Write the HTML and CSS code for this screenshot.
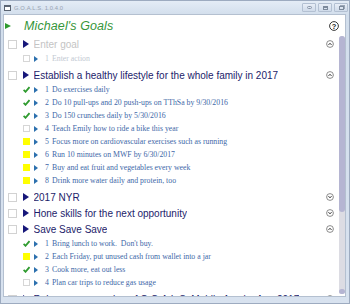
FILE: index.html
```html
<!DOCTYPE html>
<html lang="en">
<head>
  <meta charset="UTF-8">
  <meta name="viewport" content="width=device-width, initial-scale=1.0">
  <title>G.O.A.L.S. 1.0.4.0</title>
  <link rel="stylesheet" href="styles.css">
</head>
<body>
  <svg class="defs" width="0" height="0">
    <defs>
      <symbol id="chev-up" viewBox="0 0 8 8">
        <circle cx="4" cy="4" r="3.4" fill="#fff" stroke="#6e6e6e" stroke-width="0.8"/>
        <path d="M2.5 4.9 L4 3.3 L5.5 4.9" fill="none" stroke="#2a2a2a" stroke-width="1"/>
      </symbol>
      <symbol id="chev-down" viewBox="0 0 8 8">
        <circle cx="4" cy="4" r="3.4" fill="#fff" stroke="#6e6e6e" stroke-width="0.8"/>
        <path d="M2.5 3.2 L4 4.8 L5.5 3.2" fill="none" stroke="#2a2a2a" stroke-width="1"/>
      </symbol>
      <symbol id="check" viewBox="0 0 7 7">
        <path d="M0.6 3.9 L2.5 5.8 L6.5 1.1" fill="none" stroke="#2f9b2f" stroke-width="1.8"/>
      </symbol>
    </defs>
  </svg>

  <div class="window">
    <div class="titlebar">
      <span class="app-icon"></span>
      <span class="title">G.O.A.L.S. 1.0.4.0</span>
      <div class="caption">
        <span class="cap-btn"><i class="glyph-min"></i></span>
        <span class="cap-btn"><i class="glyph-max"></i></span>
        <span class="cap-btn"><i class="glyph-restore"></i></span>
      </div>
    </div>

    <div class="client">
      <div class="header">
        <span class="tri tri-green"></span>
        <h1>Michael's Goals</h1>
        <svg class="help" viewBox="0 0 10 10">
          <circle cx="5" cy="5" r="4.4" fill="#fff" stroke="#222" stroke-width="0.9"/>
          <text x="5" y="7.6" text-anchor="middle" font-size="7.5" font-weight="bold" font-family="Liberation Sans, sans-serif" fill="#222">?</text>
        </svg>
      </div>

      <div class="body">
        <div class="list">
          <div class="goal placeholder">
            <span class="box"></span><span class="tri tri-goal"></span>
            <span class="goal-text">Enter goal</span>
            <svg class="chev"><use href="#chev-up"/></svg>
          </div>
          <div class="actions">
            <div class="action placeholder">
              <span class="abox empty"></span><span class="tri tri-action"></span>
              <span class="num">1</span><span class="action-text">Enter action</span>
            </div>
          </div>

          <div class="goal">
            <span class="box"></span><span class="tri tri-goal"></span>
            <span class="goal-text">Establish a healthy lifestyle for the whole family in 2017</span>
            <svg class="chev"><use href="#chev-up"/></svg>
          </div>
          <div class="actions">
            <div class="action">
              <svg class="abox"><use href="#check"/></svg><span class="tri tri-action"></span>
              <span class="num">1</span><span class="action-text">Do exercises daily</span>
            </div>
            <div class="action">
              <svg class="abox"><use href="#check"/></svg><span class="tri tri-action"></span>
              <span class="num">2</span><span class="action-text">Do 10 pull-ups and 20 push-ups on TThSa by 9/30/2016</span>
            </div>
            <div class="action">
              <svg class="abox"><use href="#check"/></svg><span class="tri tri-action"></span>
              <span class="num">3</span><span class="action-text">Do 150 crunches daily by 5/30/2016</span>
            </div>
            <div class="action">
              <span class="abox empty"></span><span class="tri tri-action"></span>
              <span class="num">4</span><span class="action-text">Teach Emily how to ride a bike this year</span>
            </div>
            <div class="action">
              <span class="abox partial"></span><span class="tri tri-action"></span>
              <span class="num">5</span><span class="action-text">Focus more on cardiovascular exercises such as running</span>
            </div>
            <div class="action">
              <span class="abox partial"></span><span class="tri tri-action"></span>
              <span class="num">6</span><span class="action-text">Run 10 minutes on MWF by 6/30/2017</span>
            </div>
            <div class="action">
              <span class="abox partial"></span><span class="tri tri-action"></span>
              <span class="num">7</span><span class="action-text">Buy and eat fruit and vegetables every week</span>
            </div>
            <div class="action">
              <span class="abox partial"></span><span class="tri tri-action"></span>
              <span class="num">8</span><span class="action-text">Drink more water daily and protein, too</span>
            </div>
          </div>

          <div class="goal">
            <span class="box"></span><span class="tri tri-goal"></span>
            <span class="goal-text">2017 NYR</span>
            <svg class="chev"><use href="#chev-down"/></svg>
          </div>
          <div class="goal">
            <span class="box"></span><span class="tri tri-goal"></span>
            <span class="goal-text">Hone skills for the next opportunity</span>
            <svg class="chev"><use href="#chev-down"/></svg>
          </div>
          <div class="goal">
            <span class="box"></span><span class="tri tri-goal"></span>
            <span class="goal-text">Save Save Save</span>
            <svg class="chev"><use href="#chev-up"/></svg>
          </div>
          <div class="actions">
            <div class="action">
              <svg class="abox"><use href="#check"/></svg><span class="tri tri-action"></span>
              <span class="num">1</span><span class="action-text">Bring lunch to work.&nbsp; Don't buy.</span>
            </div>
            <div class="action">
              <span class="abox partial"></span><span class="tri tri-action"></span>
              <span class="num">2</span><span class="action-text">Each Friday, put unused cash from wallet into a jar</span>
            </div>
            <div class="action">
              <svg class="abox"><use href="#check"/></svg><span class="tri tri-action"></span>
              <span class="num">3</span><span class="action-text">Cook more, eat out less</span>
            </div>
            <div class="action">
              <span class="abox empty"></span><span class="tri tri-action"></span>
              <span class="num">4</span><span class="action-text">Plan car trips to reduce gas usage</span>
            </div>
          </div>

          <div class="goal">
            <span class="box"></span><span class="tri tri-goal"></span>
            <span class="goal-text">Release new version of G.O.A.L.S. Mobile App by Aug 2017</span>
            <svg class="chev"><use href="#chev-up"/></svg>
          </div>
        </div>

        <div class="scrollbar">
          <span class="thumb"></span>
          <span class="knob"></span>
        </div>
      </div>
    </div>
  </div>
</body>
</html>
```

FILE: styles.css
```css
* { box-sizing: border-box; }
body { margin: 0; width: 350px; height: 304px; overflow: hidden; font-family: "Liberation Sans", Arial, sans-serif; }
.defs { display: none; }

/* window frame */
.window { width: 350px; height: 304px; display: flex; flex-direction: column; border: 1px solid #9dabc0; background: linear-gradient(#e4ecf6, #d2deec 14px, #d8e2ef); padding: 0 3px 6px 2px; }
.titlebar { height: 13px; flex: none; display: flex; align-items: center; }
.app-icon { width: 7px; height: 6px; border: 1px solid #5a6472; border-top-width: 2px; background: #fff; margin: 0 3px 0 1px; }
.title { font-size: 5.8px; color: #98a3b2; letter-spacing: 0.1px; }
.caption { margin-left: auto; margin-right: -2px; display: flex; gap: 2px; }
.cap-btn { width: 14px; height: 9px; border: 1px solid #b3c0d2; border-radius: 1px; background: linear-gradient(#e8eef7, #d0dbea); display: flex; align-items: center; justify-content: center; }
.glyph-min { width: 5px; height: 3px; border: 1px solid #8a96a8; border-radius: 2px; }
.glyph-max { width: 5px; height: 4px; border: 1px solid #7d8a9c; border-top-width: 2px; }
.glyph-restore { width: 5px; height: 4px; border: 1px solid #7d8a9c; box-shadow: 1px -1px 0 #9aa6b6; }

/* client area */
.client { flex: 1; min-height: 0; display: flex; flex-direction: column; background: #fff; border: 1px solid #b4c0d0; }
.header { height: 21px; flex: none; display: flex; align-items: center; padding-left: 1px; }
.header h1 { margin: 1px 0 0 13px; font-size: 12.5px; font-style: italic; font-weight: normal; color: #36963a; letter-spacing: 0.1px; }
.help { width: 10px; height: 10px; margin-left: auto; margin-right: 6px; margin-top: 1px; }

.tri { width: 0; height: 0; flex: none; border-style: solid; border-color: transparent; }
.tri-green { border-width: 3.5px 0 3.5px 6px; border-left-color: #2f9a2f; }
.tri-goal { margin-left: 6px; border-width: 4px 0 4px 6px; border-left-color: #17177a; }
.tri-action { margin-left: 4px; border-width: 3.5px 0 3.5px 4px; border-left-color: #2c70ae; }

.body { flex: 1; min-height: 0; display: flex; }
.list { flex: 1; min-width: 0; overflow: hidden; padding-left: 4px; }

.goal { height: 16px; display: flex; align-items: center; }
.box { width: 9px; height: 9px; flex: none; border: 1px solid #d2d2d2; }
.goal-text { margin-left: 4.5px; font-size: 10px; color: #1c1c6a; white-space: nowrap; overflow: hidden; }
.goal.placeholder .goal-text { color: #c4c4c4; }
.chev { width: 8px; height: 8px; flex: none; margin-left: auto; margin-right: 5px; }

.actions { margin-bottom: 2px; }
.action { height: 13px; display: flex; align-items: center; padding-left: 15px; font-family: "Liberation Serif", "Times New Roman", serif; font-size: 7.8px; color: #4068a8; }
.abox { width: 7px; height: 7px; flex: none; }
.abox.empty { border: 1px solid #d6d6d6; }
.abox.partial { background: #ffff00; }
.num { margin-left: 7px; width: 7px; flex: none; }
.action-text { white-space: nowrap; }
.action.placeholder { color: #c2c9d2; }

.scrollbar { width: 6px; flex: none; margin-bottom: 2px; display: flex; flex-direction: column; background: #dcdce3; border-radius: 3px; }
.thumb { height: 176px; background: #b5b5d2; border-radius: 3px; }
.knob { margin-top: auto; height: 5px; background: #b5b5d2; border-radius: 3px; }
```
